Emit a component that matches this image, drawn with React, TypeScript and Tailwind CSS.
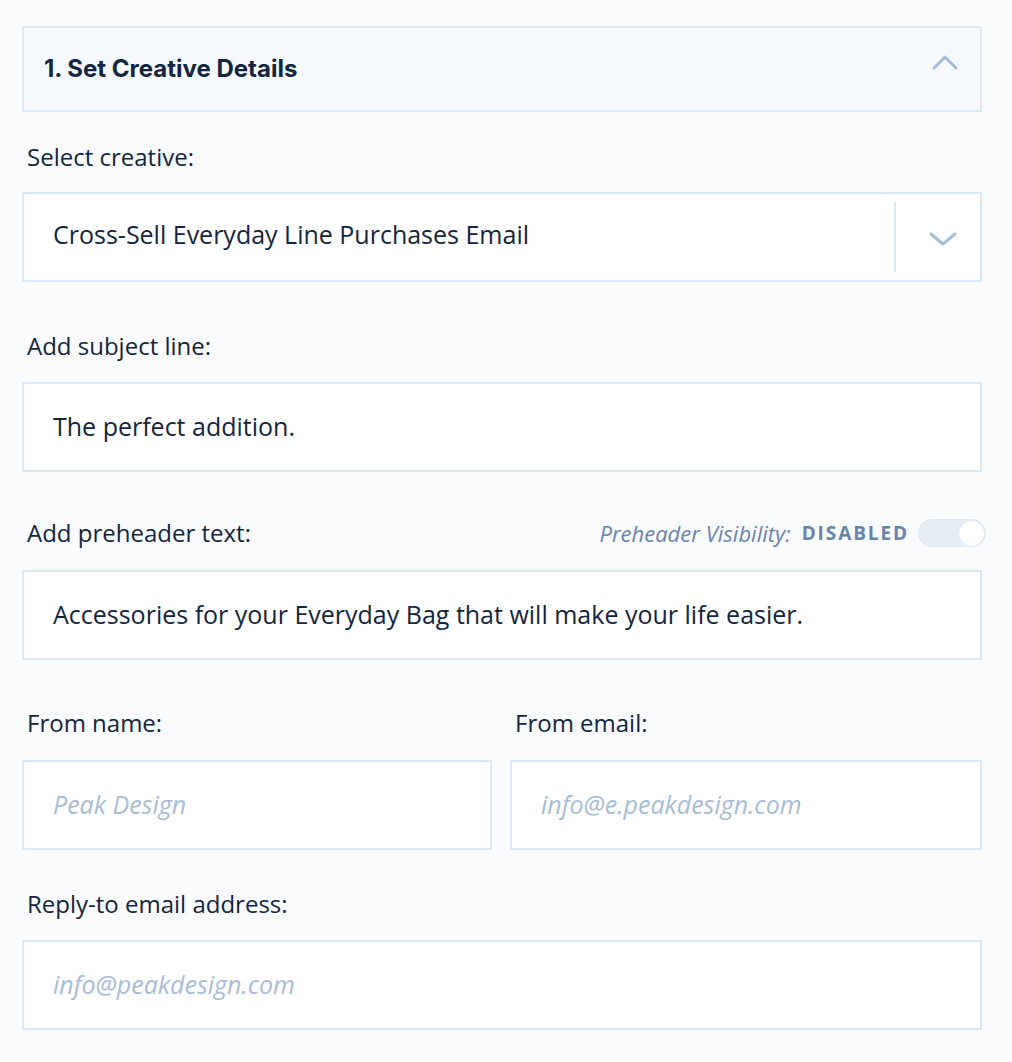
import React from "react";

const Label = ({ children, className = "" }: { children: React.ReactNode; className?: string }) => (
  <div className={`text-[24px] leading-[28px] text-[#14253d] ${className}`}>{children}</div>
);

const Field = ({ value, placeholder }: { value?: string; placeholder?: string }) => (
  <div className="h-[90px] w-full border-2 border-[#dce7f4] bg-white flex items-center px-[29px]">
    {value ? (
      <span className="text-[25px] text-[#14253d]">{value}</span>
    ) : (
      <span className="text-[25px] italic text-[#a9bcd6]">{placeholder}</span>
    )}
  </div>
);

const App = () => {
  return (
    <div
      className="min-h-[1062px] w-full bg-[#f9fbfd] pt-[26px] pl-[22px] pr-[30px]"
      style={{ fontFamily: '"Open Sans", "Liberation Sans", sans-serif' }}
    >
      <div className="w-[960px]">
        <div className="h-[86px] border-2 border-[#dce7f4] bg-[#f5f9fe] flex items-center justify-between pl-[20px] pr-[20px]">
          <h2 className="text-[24px] font-bold text-[#132640]" style={{ fontFamily: "Inter, 'Liberation Sans', sans-serif" }}>
            1. Set Creative Details
          </h2>
          <svg width="30" height="18" viewBox="0 0 30 18" className="mb-[12px] ml-[6px]">
            <path d="M4 14 L15 3 L26 14" fill="none" stroke="#a6bdd9" strokeWidth="3" strokeLinecap="round" strokeLinejoin="round" />
          </svg>
        </div>

        <Label className="mt-[31px] mb-[21px] pl-[5px]">Select creative:</Label>
        <div className="h-[90px] w-full border-2 border-[#dce7f4] bg-white flex items-center">
          <span className="flex-1 pl-[29px] pb-[5px] text-[25px] text-[#14253d]">Cross-Sell Everyday Line Purchases Email</span>
          <div className="h-[70px] w-[2px] bg-[#dce7f4]" />
          <div className="w-[84px] flex items-center justify-center pl-[10px]">
            <svg width="30" height="18" viewBox="0 0 30 18" className="mt-[4px]">
              <path d="M3 4 L15 14 L27 4" fill="none" stroke="#a6bdd9" strokeWidth="3" strokeLinecap="round" strokeLinejoin="round" />
            </svg>
          </div>
        </div>

        <Label className="mt-[50px] mb-[22px] pl-[5px]">Add subject line:</Label>
        <Field value="The perfect addition." />

        <div className="mt-[47px] mb-[23px] h-[28px] flex items-center justify-between pl-[5px]">
          <Label>Add preheader text:</Label>
          <div className="flex items-center mr-[-4px] h-[28px]">
            <span className="text-[22px] leading-[28px] italic text-[#6a84a9]">Preheader Visibility:</span>
            <span className="ml-[11px] text-[19px] leading-[28px] font-bold tracking-[0.1em] text-[#6a84a9]">DISABLED</span>
            <div className="ml-[9px] h-[28px] w-[68px] rounded-full bg-[#e7eef5] border border-[#dde8f4] flex items-center justify-end pr-[1px]">
              <div className="h-[25px] w-[25px] rounded-full bg-white shadow-[0_0_1px_rgba(0,0,0,0.1)]" />
            </div>
          </div>
        </div>
        <Field value="Accessories for your Everyday Bag that will make your life easier." />

        <div className="mt-[49px] grid grid-cols-[470px_472px] gap-x-[18px]">
          <div>
            <Label className="mb-[23px] pl-[5px]">From name:</Label>
            <Field placeholder="Peak Design" />
          </div>
          <div>
            <Label className="mb-[23px] pl-[5px]">From email:</Label>
            <Field placeholder="info@e.peakdesign.com" />
          </div>
        </div>

        <Label className="mt-[40px] mb-[22px] pl-[5px]">Reply-to email address:</Label>
        <Field placeholder="info@peakdesign.com" />
      </div>
    </div>
  );
};

export default App;
